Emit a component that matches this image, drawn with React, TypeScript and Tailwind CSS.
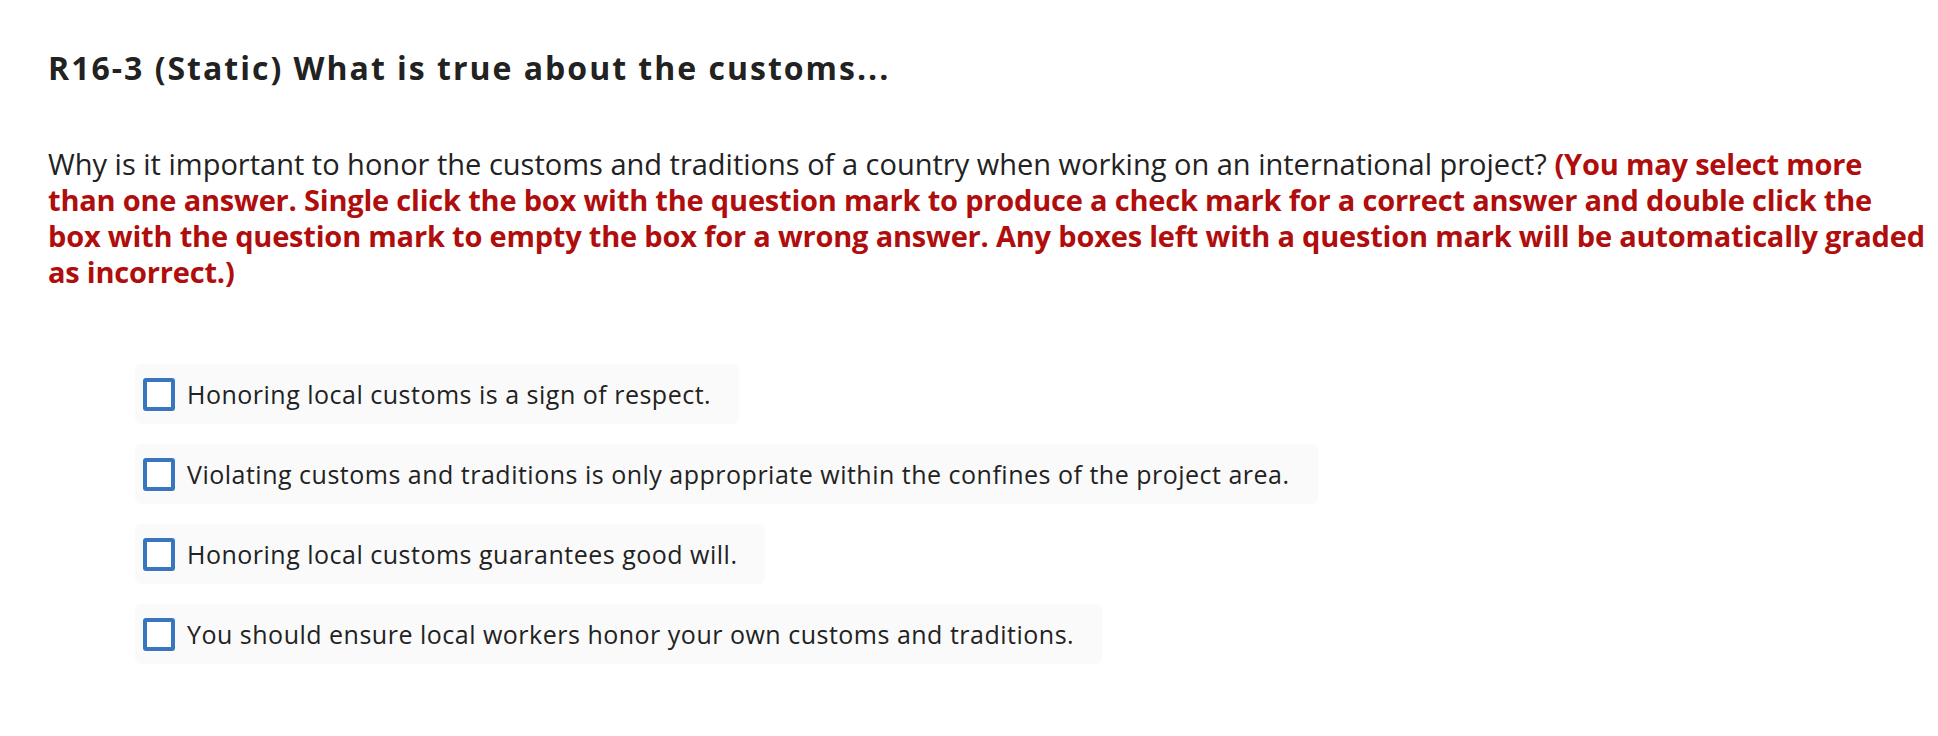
import React from "react";

const options = [
  "Honoring local customs is a sign of respect.",
  "Violating customs and traditions is only appropriate within the confines of the project area.",
  "Honoring local customs guarantees good will.",
  "You should ensure local workers honor your own customs and traditions.",
];

export default function App() {
  return (
    <div
      className="min-h-[736px] w-full bg-white pl-[48px] pt-[50px] text-[#222222]"
      style={{ fontFamily: "'Open Sans', Lato, sans-serif" }}
    >
      <h1 className="text-[32px] font-bold leading-[36px] tracking-[2px] text-[#222222]">
        R16-3 (Static) What is true about the customs...
      </h1>
      <p className="mt-[60px] whitespace-nowrap text-[29px] leading-[36px] text-[#222222]">
        Why is it important to honor the customs and traditions of a country when working on an international project?{" "}
        <span className="font-bold tracking-[-0.2px] text-[#b00d0d]">
          (You may select more
          <br />
          than one answer. Single click the box with the question mark to produce a check mark for a correct answer and double click the
          <br />
          box with the question mark to empty the box for a wrong answer. Any boxes left with a question mark will be automatically graded
          <br />
          as incorrect.)
        </span>
      </p>
      <div className="mt-[74px] ml-[87px] flex flex-col items-start gap-[20px]">
        {options.map((o) => (
          <div
            key={o}
            className="flex h-[60px] items-center gap-[12px] rounded-[6px] bg-[#fafafa] pl-[8px] pr-[28px]"
          >
            <span className="block h-[33px] w-[32px] shrink-0 rounded-[3px] border-[4px] border-[#3a75bf] bg-white" />
            <span className="text-[25px] leading-[30px] tracking-[0.5px] text-[#222222]">{o}</span>
          </div>
        ))}
      </div>
    </div>
  );
}
